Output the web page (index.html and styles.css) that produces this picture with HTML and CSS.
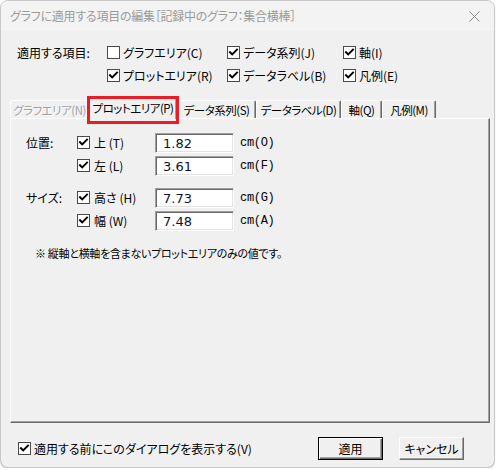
FILE: index.html
```html
<!DOCTYPE html>
<html lang="ja">
<head>
<meta charset="utf-8">
<title>グラフに適用する項目の編集</title>
<link rel="stylesheet" href="styles.css">
</head>
<body>
<div class="window">
  <div class="titlebar">
    <span class="title">グラフに適用する項目の編集［記録中のグラフ：集合横棒］</span>
    <svg class="close" width="11" height="11" viewBox="0 0 11 11"><path d="M0.5 0.5L10.5 10.5M10.5 0.5L0.5 10.5" stroke="#8c8c8c" stroke-width="1" fill="none"/></svg>
  </div>
  <div class="main">
    <div class="targets">
      <span class="targets-label">適用する項目:</span>
      <label class="check"><span class="box"></span>グラフエリア(C)</label>
      <label class="check"><span class="box on"><svg viewBox="0 0 11 11"><path d="M2 5.2L4.2 7.4L9 2.6" /></svg></span>データ系列(J)</label>
      <label class="check"><span class="box on"><svg viewBox="0 0 11 11"><path d="M2 5.2L4.2 7.4L9 2.6" /></svg></span>軸(I)</label>
      <label class="check"><span class="box on"><svg viewBox="0 0 11 11"><path d="M2 5.2L4.2 7.4L9 2.6" /></svg></span>プロットエリア(R)</label>
      <label class="check"><span class="box on"><svg viewBox="0 0 11 11"><path d="M2 5.2L4.2 7.4L9 2.6" /></svg></span>データラベル(B)</label>
      <label class="check"><span class="box on"><svg viewBox="0 0 11 11"><path d="M2 5.2L4.2 7.4L9 2.6" /></svg></span>凡例(E)</label>
    </div>

    <div class="tabs">
      <div class="tab tab--chart disabled">グラフエリア(N)</div>
      <div class="tab tab--plot active">プロットエリア(P)</div>
      <div class="tab tab--series">データ系列(S)</div>
      <div class="tab tab--labels">データラベル(D)</div>
      <div class="tab tab--axis">軸(Q)</div>
      <div class="tab tab--legend">凡例(M)</div>
    </div>

    <div class="panel">
      <div class="field-group">
        <span class="group-label">位置:</span>
        <label class="check"><span class="box on"><svg viewBox="0 0 11 11"><path d="M2 5.2L4.2 7.4L9 2.6" /></svg></span>上 (T)</label>
        <span class="input">1.82</span>
        <span class="unit">cm(O)</span>
        <label class="check"><span class="box on"><svg viewBox="0 0 11 11"><path d="M2 5.2L4.2 7.4L9 2.6" /></svg></span>左 (L)</label>
        <span class="input">3.61</span>
        <span class="unit">cm(F)</span>
      </div>
      <div class="field-group">
        <span class="group-label">サイズ:</span>
        <label class="check"><span class="box on"><svg viewBox="0 0 11 11"><path d="M2 5.2L4.2 7.4L9 2.6" /></svg></span>高さ (H)</label>
        <span class="input">7.73</span>
        <span class="unit">cm(G)</span>
        <label class="check"><span class="box on"><svg viewBox="0 0 11 11"><path d="M2 5.2L4.2 7.4L9 2.6" /></svg></span>幅 (W)</label>
        <span class="input">7.48</span>
        <span class="unit">cm(A)</span>
      </div>
      <p class="note">※ 縦軸と横軸を含まないプロットエリアのみの値です。</p>
    </div>

    <div class="footer">
      <label class="check"><span class="box on"><svg viewBox="0 0 11 11"><path d="M2 5.2L4.2 7.4L9 2.6" /></svg></span>適用する前にこのダイアログを表示する(V)</label>
      <div class="buttons">
        <button class="btn default">適用</button>
        <button class="btn">キャンセル</button>
      </div>
    </div>
  </div>
</div>
</body>
</html>
```

FILE: styles.css
```css
* { box-sizing: border-box; }

body {
  margin: 0;
  background: #ffffff;
  font-family: "Noto Sans CJK JP", "Noto Sans", sans-serif;
  font-size: 12px;
  line-height: 16px;
  font-feature-settings: "palt";
  color: #000;
}

.window {
  width: 495px;
  height: 468px;
  border: 1px solid #c8c8c8;
  border-radius: 8px;
  background: #f0f0f0;
  display: flex;
  flex-direction: column;
  overflow: hidden;
  box-shadow: 0 1px 1px rgba(0, 0, 0, 0.2);
}

/* title bar */
.titlebar {
  height: 30px;
  flex: none;
  display: flex;
  align-items: center;
  padding: 0 10px 0 9px;
  background: #f3f3f3;
  color: #9b9b9b;
}
.title { letter-spacing: -0.25px; }
.close { margin-left: auto; margin-right: 4px; }

.main {
  flex: 1;
  display: flex;
  flex-direction: column;
  padding: 0 4px 0 9px;
}

/* checkbox */
.check {
  display: flex;
  align-items: center;
  gap: 3px;
  white-space: nowrap;
}
.box {
  width: 13px;
  height: 13px;
  flex: none;
  border: 1px solid #4a4a4a;
  background: #fff;
  display: flex;
  align-items: center;
  justify-content: center;
}
.box svg { width: 11px; height: 11px; }
.box path { fill: none; stroke: #000; stroke-width: 2; stroke-linecap: square; }

/* items to apply */
.targets {
  display: grid;
  grid-template-columns: 90px 120px 116px 1fr;
  grid-auto-rows: 23px;
  align-items: center;
  padding: 10px 0 0 7px;
}
.targets-label { grid-row: span 2; align-self: start; line-height: 23px; }

/* tab strip */
.tabs {
  display: flex;
  align-items: flex-end;
  height: 21px;
  margin-top: 10px;
  position: relative;
  z-index: 1;
  font-size: 11.5px;
  letter-spacing: -0.5px;
}
.tab {
  height: 18px;
  display: flex;
  align-items: center;
  justify-content: center;
  white-space: nowrap;
  border-top: 1px solid #fff;
  border-left: 1px solid #fff;
  border-right: 1px solid #696969;
  box-shadow: inset -1px 0 0 #a0a0a0;
  border-radius: 2px 2px 0 0;
  background: #f0f0f0;
}
.tab--chart { width: 79px; }
.tab--plot { width: 88px; }
.tab--series { width: 79px; }
.tab--labels { width: 85px; }
.tab--axis { width: 41px; }
.tab--legend { width: 54px; }
.tab.disabled { color: #a0a0a0; text-shadow: 1px 1px 0 #fff; border-right-color: transparent; box-shadow: none; }
.tab.active {
  position: relative;
  height: 21px;
  margin-bottom: -1px;
  padding-bottom: 2px;
}
.tab.active::after {
  content: "";
  position: absolute;
  left: -3px;
  right: -3px;
  top: -3px;
  bottom: -5px;
  border: 3px solid #ed1c24;
}

/* tab page */
.panel {
  width: 480px;
  height: 305px;
  border-top: 1px solid #fff;
  border-left: 1px solid #fff;
  border-right: 1px solid #696969;
  border-bottom: 1px solid #696969;
  box-shadow: inset -1px -1px 0 #a0a0a0;
  padding: 12px 0 0 15px;
}
.field-group {
  display: grid;
  grid-template-columns: 51px 78px 85px auto;
  grid-auto-rows: 23px;
  align-items: center;
}
.field-group + .field-group { margin-top: 9px; }
.group-label { grid-row: span 2; align-self: start; line-height: 23px; }
.field-group .check { gap: 4px; }

.input {
  width: 79px;
  height: 20px;
  background: #fff;
  border-top: 1px solid #a0a0a0;
  border-left: 1px solid #a0a0a0;
  border-right: 1px solid #fff;
  border-bottom: 1px solid #fff;
  box-shadow: inset 1px 1px 0 #696969, inset -1px -1px 0 #e3e3e3;
  padding: 2px 0 0 7px;
  font-family: "DejaVu Sans", sans-serif;
  font-size: 13px;
  line-height: 16px;
  color: #101030;
}
.unit { font-family: "Liberation Mono", monospace; font-size: 12px; letter-spacing: -0.3px; }

.note { margin: 13px 0 0 9px; font-size: 11px; letter-spacing: -0.3px; }

/* footer */
.footer {
  flex: 1;
  display: flex;
  align-items: center;
  padding: 7px 0 0 8px;
}
.buttons { margin-left: auto; margin-right: 26px; display: flex; gap: 16px; }
.btn {
  width: 65px;
  height: 23px;
  font: inherit;
  font-size: 12px;
  color: #000;
  background: #f0f0f0;
  border-top: 1px solid #fff;
  border-left: 1px solid #fff;
  border-right: 1px solid #696969;
  border-bottom: 1px solid #696969;
  box-shadow: inset -1px -1px 0 #a0a0a0;
  padding: 0;
}
.btn.default {
  border: 1px solid #000;
  box-shadow: inset 1px 1px 0 #fff, inset -1px -1px 0 #696969, inset -2px -2px 0 #a0a0a0;
}
```
